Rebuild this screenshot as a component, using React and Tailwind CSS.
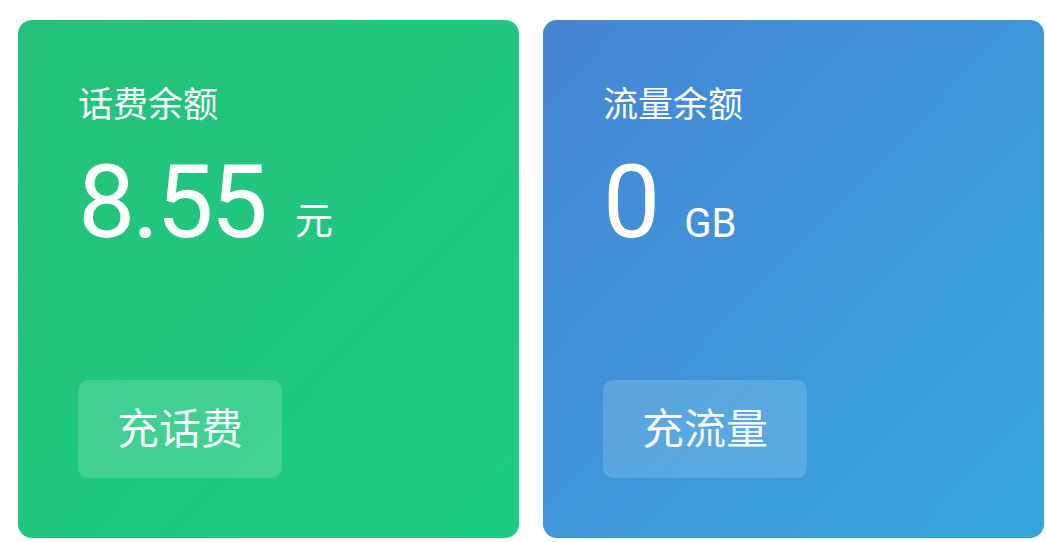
export default function App() {
  const cards = [
    {
      title: '话费余额',
      value: '8.55',
      unit: '元',
      action: '充话费',
      bg: 'bg-gradient-to-br from-[#25c17a] to-[#1ccd86]',
    },
    {
      title: '流量余额',
      value: '0',
      unit: 'GB',
      action: '充流量',
      bg: 'bg-gradient-to-br from-[#4685d5] to-[#35a7de]',
    },
  ];

  return (
    <div
      className="w-[1046px] h-[542px] bg-white flex gap-6 pl-[18px] pt-5"
      style={{ fontFamily: 'Roboto, "Noto Sans CJK SC", sans-serif' }}
    >
      {cards.map((c) => (
        <div
          key={c.title}
          className={`w-[501px] h-[518px] rounded-[14px] ${c.bg} text-white flex flex-col px-[60px] pt-[68px] pb-[60px]`}
        >
          <div className="text-[35px] leading-none">{c.title}</div>
          <div className="flex items-baseline mt-[28px]">
            <span className="text-[102px] leading-none tracking-[-3px]">{c.value}</span>
            <span
              className={`${c.unit === 'GB' ? 'text-[40px] ml-[27px]' : 'text-[38px] ml-[30px] -translate-y-[3px]'} leading-none`}
            >
              {c.unit}
            </span>
          </div>
          <button className="mt-auto w-[204px] h-[98px] rounded-[11px] bg-white/15 text-[42px] leading-none text-white/95 pt-[2px]">
            {c.action}
          </button>
        </div>
      ))}
    </div>
  );
}
